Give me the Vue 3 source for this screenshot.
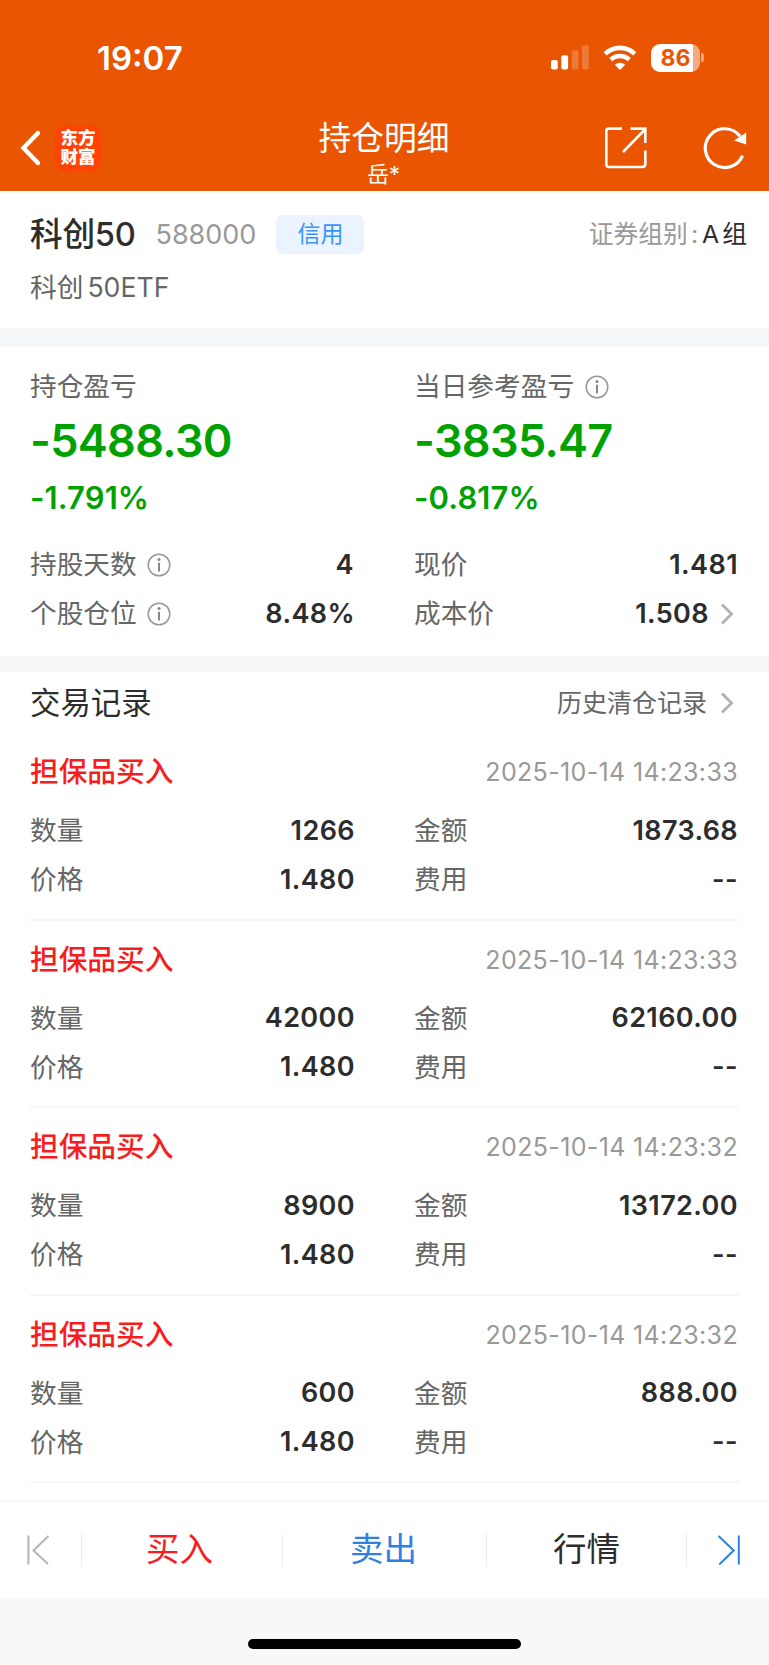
<script setup>
const trades = [
  { id: 1, time: '2025-10-14 14:23:33', amount: '1266', price: '1.480', total: '1873.68', fee: '--' },
  { id: 2, time: '2025-10-14 14:23:33', amount: '42000', price: '1.480', total: '62160.00', fee: '--' },
  { id: 3, time: '2025-10-14 14:23:32', amount: '8900', price: '1.480', total: '13172.00', fee: '--' },
  { id: 4, time: '2025-10-14 14:23:32', amount: '600', price: '1.480', total: '888.00', fee: '--' }
]
</script>

<template>
  <div class="page">
    <header class="top">
      <div class="status-bar">
        <span class="clock">19:07</span>
        <div class="status-icons">
          <svg class="signal" width="38" height="25" viewBox="0 0 38 25" fill="#fff">
            <rect x="0" y="15" width="6.8" height="9.6" rx="2" />
            <rect x="10.3" y="10.2" width="6.8" height="14.4" rx="2" />
            <rect x="20.7" y="5.2" width="6.8" height="19.4" rx="2" opacity="0.22" />
            <rect x="31" y="0.2" width="6.8" height="24.4" rx="2" opacity="0.22" />
          </svg>
          <svg class="wifi" width="34" height="26" viewBox="0 0 34 26">
            <path d="M2.2 8.8a21.4 21.4 0 0 1 29.6 0" fill="none" stroke="#fff" stroke-width="4.6" />
            <path d="M7.7 14.7a13.4 13.4 0 0 1 18.6 0" fill="none" stroke="#fff" stroke-width="4.4" />
            <path d="M17 25l-5.2-5.3a7.8 7.8 0 0 1 10.4 0z" fill="#fff" />
          </svg>
          <div class="battery"><span>86</span></div>
          <i class="battery-cap"></i>
        </div>
      </div>
      <div class="nav">
        <div class="nav-left">
          <svg width="20" height="36" viewBox="0 0 20 36">
            <path d="M18 3L3.5 18 18 33" fill="none" stroke="#fff" stroke-width="4.4" stroke-linecap="round" />
          </svg>
          <div class="logo"><span>东方</span><span>财富</span></div>
        </div>
        <div class="nav-title">
          <h1>持仓明细</h1>
          <p>岳*</p>
        </div>
        <div class="nav-right">
          <svg width="44" height="44" viewBox="0 0 44 44" fill="none" stroke="#fff" stroke-width="2.6">
            <path d="M18 2.6H5Q2.3 2.6 2.3 5.3V38Q2.3 41 5 41H38Q41.3 41 41.3 38V24.5" />
            <path d="M26.5 2.6H41.3V17M19 26L40.5 4" />
          </svg>
          <svg width="46" height="46" viewBox="0 0 46 46">
            <path d="M39.6 30.6A19.4 19.4 0 1 1 37 11.2" fill="none" stroke="#fff" stroke-width="3.2" />
            <path d="M43.2 7.4V19.4L31.2 15.6z" fill="#fff" />
          </svg>
        </div>
      </div>
    </header>

    <section class="stock">
      <div class="stock-row">
        <strong class="stock-name">科创50</strong>
        <span class="stock-code">588000</span>
        <span class="badge">信用</span>
        <span class="group">证券组别<i>:</i><b>A</b><b>组</b></span>
      </div>
      <div class="stock-full">科创<span>50ETF</span></div>
    </section>

    <section class="summary">
      <div class="col">
        <div class="label-row"><span class="label">持仓盈亏</span></div>
        <div class="profit">-5488.30</div>
        <div class="percent">-1.791%</div>
        <div class="row">
          <span class="label">持股天数</span>
          <svg class="info" width="24" height="24" viewBox="0 0 24 24">
            <circle cx="12" cy="12" r="10.8" fill="none" stroke="#999" stroke-width="1.5" />
            <path d="M12 9.8V18.4" stroke="#888" stroke-width="2" />
            <circle cx="12" cy="6.4" r="1.5" fill="#888" />
          </svg>
          <span class="value">4</span>
        </div>
        <div class="row">
          <span class="label">个股仓位</span>
          <svg class="info" width="24" height="24" viewBox="0 0 24 24">
            <circle cx="12" cy="12" r="10.8" fill="none" stroke="#999" stroke-width="1.5" />
            <path d="M12 9.8V18.4" stroke="#888" stroke-width="2" />
            <circle cx="12" cy="6.4" r="1.5" fill="#888" />
          </svg>
          <span class="value">8.48%</span>
        </div>
      </div>
      <div class="col">
        <div class="label-row">
          <span class="label">当日参考盈亏</span>
          <svg class="info" width="24" height="24" viewBox="0 0 24 24">
            <circle cx="12" cy="12" r="10.8" fill="none" stroke="#999" stroke-width="1.5" />
            <path d="M12 9.8V18.4" stroke="#888" stroke-width="2" />
            <circle cx="12" cy="6.4" r="1.5" fill="#888" />
          </svg>
        </div>
        <div class="profit">-3835.47</div>
        <div class="percent">-0.817%</div>
        <div class="row">
          <span class="label">现价</span>
          <span class="value">1.481</span>
        </div>
        <div class="row">
          <span class="label">成本价</span>
          <span class="value">1.508</span>
          <svg class="arrow" width="14" height="24" viewBox="0 0 14 24">
            <path d="M2 2.4L11.6 12 2 21.6" fill="none" stroke="#b2b2b2" stroke-width="2.8" />
          </svg>
        </div>
      </div>
    </section>

    <section class="records">
      <div class="records-head">
        <h2>交易记录</h2>
        <span class="history">历史清仓记录</span>
        <svg class="arrow" width="14" height="24" viewBox="0 0 14 24">
          <path d="M2 2.4L11.6 12 2 21.6" fill="none" stroke="#b2b2b2" stroke-width="2.8" />
        </svg>
      </div>
      <ul>
        <li v-for="trade in trades" :key="trade.id" class="trade">
          <div class="trade-head">
            <strong>担保品买入</strong>
            <time>{{ trade.time }}</time>
          </div>
          <div class="trade-grid">
            <div class="row">
              <span class="label">数量</span><span class="value">{{ trade.amount }}</span>
            </div>
            <div class="row">
              <span class="label">金额</span><span class="value">{{ trade.total }}</span>
            </div>
            <div class="row">
              <span class="label">价格</span><span class="value">{{ trade.price }}</span>
            </div>
            <div class="row">
              <span class="label">费用</span><span class="value">{{ trade.fee }}</span>
            </div>
          </div>
        </li>
      </ul>
    </section>

    <footer class="actions">
      <button class="edge">
        <svg width="24" height="30" viewBox="0 0 24 30" fill="none" stroke="#b5b5b5" stroke-width="2">
          <path d="M2.4 0.5V29.5M22.5 1L7.5 15.5 22 29" />
        </svg>
      </button>
      <button class="buy"><span>买入</span></button>
      <button class="sell"><span>卖出</span></button>
      <button class="quote"><span>行情</span></button>
      <button class="edge last">
        <svg width="24" height="30" viewBox="0 0 24 30" fill="none" stroke="#2f80e4" stroke-width="2">
          <path d="M21.8 0.5V29.5M1.5 1L16.7 15.5 2.2 29.5" />
        </svg>
      </button>
    </footer>
    <div class="home"><i></i></div>
  </div>
</template>

<style>
body {
  background: #fff;
}
</style>

<style scoped>
.page {
  display: flex;
  flex-direction: column;
  width: 769px;
  height: 1665px;
  overflow: hidden;
  background: #f7f8fa;
  color: #2d2d2d;
  font-family: Inter, 'Noto Sans CJK SC', sans-serif;
}

h1,
h2,
p,
ul {
  margin: 0;
  padding: 0;
  font-weight: 400;
  list-style: none;
}

svg {
  display: block;
  flex: none;
}

/* header */
.top {
  height: 191px;
  background: #ea5502;
  color: #fff;
}

.status-bar {
  display: flex;
  justify-content: space-between;
  align-items: center;
  height: 115px;
  padding: 0 65px 0 97px;
}

.clock {
  font-size: 33px;
  font-weight: 600;
  line-height: 40px;
}

.status-icons {
  display: flex;
  align-items: center;
}

.wifi {
  margin-left: 14px;
}

.battery {
  width: 49px;
  height: 28px;
  margin-left: 14px;
  border-radius: 9px;
  background: linear-gradient(to right, #fff 86%, rgba(255, 255, 255, 0.5) 86%);
  color: #ea5502;
  font-size: 23px;
  font-weight: 700;
  line-height: 28px;
  text-align: center;
}

.battery-cap {
  width: 3px;
  height: 9px;
  margin-left: 1px;
  border-radius: 0 4px 4px 0;
  background: rgba(255, 255, 255, 0.5);
}

.nav {
  display: grid;
  grid-template-columns: 1fr auto 1fr;
  height: 76px;
}

.nav-left,
.nav-right {
  display: flex;
  align-items: center;
  height: 66px;
}

.nav-left {
  padding-left: 20px;
}

.logo {
  display: flex;
  flex-direction: column;
  justify-content: center;
  width: 46px;
  height: 44px;
  margin-left: 15px;
  padding-bottom: 2px;
  border-radius: 10px;
  background: #ff4304;
  font-size: 17.5px;
  font-weight: 800;
  line-height: 19px;
  text-align: center;
}

.nav-title {
  text-align: center;
}

.nav-title h1 {
  padding-right: 1px;
  font-size: 32.8px;
  line-height: 47px;
}

.nav-title p {
  padding-right: 2px;
  font-size: 22px;
  line-height: 25px;
}

.nav-right {
  justify-content: flex-end;
  gap: 55px;
  padding-right: 20px;
}

/* stock name */
.stock {
  height: 97px;
  padding: 20px 22px 20px 30px;
  background: #fff;
}

.stock-row {
  display: flex;
  align-items: center;
  height: 46px;
}

.stock-name {
  font-size: 32.7px;
  font-weight: 500;
  letter-spacing: -0.3px;
  line-height: 44px;
}

.stock-code {
  margin-left: 20px;
  color: #999;
  font-size: 27px;
}

.badge {
  width: 88px;
  height: 39px;
  margin-left: 20px;
  border-radius: 7px;
  background: #eaf3ff;
  color: #3a94fc;
  font-size: 23px;
  line-height: 38px;
  text-align: center;
}

.group {
  display: flex;
  margin-left: auto;
  color: #999;
  font-size: 24.8px;
  line-height: 40px;
}

.group i {
  margin: 0 4px 0 3px;
  font-style: normal;
}

.group b {
  color: #2d2d2d;
  font-weight: 400;
}

.group b + b {
  margin-left: 3px;
}

.stock-full {
  margin-top: 13px;
  color: #666;
  font-size: 26.7px;
  line-height: 34px;
}

.stock-full span {
  margin-left: 4px;
}

/* profit summary */
.summary {
  display: grid;
  grid-template-columns: 325px 325px;
  column-gap: 59px;
  height: 309px;
  margin-top: 19px;
  padding: 20px 30px 0;
  background: #fff;
  box-sizing: border-box;
}

.label-row {
  display: flex;
  align-items: center;
  height: 40px;
}

.info {
  margin-left: 10px;
}

.label-row .info {
  margin-left: 11px;
}

.profit {
  color: #02a102;
  font-size: 45px;
  font-weight: 600;
  letter-spacing: -0.7px;
  line-height: 68px;
}

.percent {
  margin-bottom: 19px;
  color: #02a102;
  font-size: 31px;
  font-weight: 600;
  letter-spacing: 0.1px;
  line-height: 46px;
}

.row {
  display: flex;
  align-items: center;
  height: 49px;
}

/* Chinese glyphs sit lower than the digits, so labels are lifted a little */
.label {
  padding-bottom: 1px;
  color: #666;
  font-size: 26.7px;
  line-height: 34px;
}

.label-row .label {
  padding-bottom: 2px;
}

.value {
  margin-left: auto;
  font-size: 27px;
  font-weight: 600;
  letter-spacing: 0.4px;
  line-height: 34px;
}

.col + .col .value,
.row:nth-child(even) .value {
  padding-right: 1px;
}

.arrow {
  margin-left: 10px;
  margin-right: 5px;
}

/* trade records */
.records {
  height: 828px;
  margin-top: 16px;
  padding: 0 30px;
  background: #fff;
}

.records-head {
  display: flex;
  align-items: center;
  height: 61px;
}

.records-head h2 {
  font-size: 30.4px;
  line-height: 42px;
}

.history {
  margin-left: auto;
  color: #666;
  font-size: 25px;
  line-height: 42px;
}

.records-head .arrow {
  margin-left: 13px;
}

.trade {
  height: 187.6px;
  padding-top: 19px;
  border-bottom: 2px solid #f6f6f6;
  box-sizing: border-box;
}

.trade-head {
  display: flex;
  justify-content: space-between;
  align-items: center;
  height: 40px;
  margin-bottom: 14px;
}

.trade-head strong {
  color: #f81d1d;
  font-size: 28.7px;
  font-weight: 500;
  line-height: 36px;
}

.trade-head time {
  padding-right: 1px;
  color: #999;
  font-size: 25px;
  letter-spacing: 0.35px;
}

.trade-grid {
  display: grid;
  grid-template-columns: 325px 325px;
  column-gap: 59px;
}

/* bottom bar */
.actions {
  display: grid;
  grid-template-columns: 82px 201px 204px 200px 82px;
  align-items: center;
  height: 98px;
  border-top: 2px solid #f6f6f6;
  background: #fff;
  box-sizing: border-box;
}

.actions button {
  display: flex;
  align-items: center;
  justify-content: center;
  height: 33px;
  padding: 0 2px 1px 0;
  border: 0;
  border-right: 1px solid #ececec;
  background: none;
  font-family: inherit;
  font-size: 33.5px;
  line-height: 33px;
}

.actions .edge {
  padding: 0 5px 0 0;
}

.actions .last {
  padding: 0 0 0 1px;
  border-right: 0;
}

.actions .buy {
  padding-right: 5px;
  color: #f81d1d;
}

.sell {
  color: #2f80e4;
}

.actions .quote {
  padding-right: 0;
  color: #2d2d2d;
}

.home {
  padding-top: 41px;
}

.home i {
  display: block;
  width: 273px;
  height: 10px;
  margin: 0 auto;
  border-radius: 5px;
  background: #000;
}
</style>
